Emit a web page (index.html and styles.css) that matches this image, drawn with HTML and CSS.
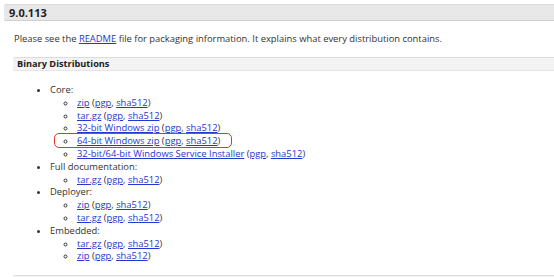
FILE: index.html
```html
<!DOCTYPE html>
<html lang="en">

<head>
    <meta charset="UTF-8">
    <meta name="viewport" content="width=device-width, initial-scale=1.0">
    <title>Tomcat 9 Downloads</title>
    <link rel="stylesheet" href="styles.css">
</head>

<body>
    <div class="page">
        <h3 class="release">9.0.113</h3>
        <div class="section">
            <p class="intro">Please see the <a href="#">README</a> file for packaging information. It explains what every distribution contains.</p>

            <h4 class="dist">Binary Distributions</h4>
            <ul class="groups">
                <li>Core:
                    <ul>
                        <li><a href="#">zip</a> (<a href="#">pgp</a>, <a href="#">sha512</a>)</li>
                        <li><a href="#">tar.gz</a> (<a href="#">pgp</a>, <a href="#">sha512</a>)</li>
                        <li><a href="#">32-bit Windows zip</a> (<a href="#">pgp</a>, <a href="#">sha512</a>)</li>
                        <li><span class="marked"><a href="#">64-bit Windows zip</a> (<a href="#">pgp</a>, <a href="#">sha512</a>)</span></li>
                        <li><a href="#">32-bit/64-bit Windows Service Installer</a> (<a href="#">pgp</a>, <a href="#">sha512</a>)</li>
                    </ul>
                </li>
                <li>Full documentation:
                    <ul>
                        <li><a href="#">tar.gz</a> (<a href="#">pgp</a>, <a href="#">sha512</a>)</li>
                    </ul>
                </li>
                <li>Deployer:
                    <ul>
                        <li><a href="#">zip</a> (<a href="#">pgp</a>, <a href="#">sha512</a>)</li>
                        <li><a href="#">tar.gz</a> (<a href="#">pgp</a>, <a href="#">sha512</a>)</li>
                    </ul>
                </li>
                <li>Embedded:
                    <ul>
                        <li><a href="#">tar.gz</a> (<a href="#">pgp</a>, <a href="#">sha512</a>)</li>
                        <li><a href="#">zip</a> (<a href="#">pgp</a>, <a href="#">sha512</a>)</li>
                    </ul>
                </li>
            </ul>

            <h4 class="dist"></h4>
        </div>
    </div>
</body>

</html>
```

FILE: styles.css
```css
body {
    margin: 0;
    background: #fff;
    color: #333;
    font-family: "Open Sans", "Liberation Sans", sans-serif;
    font-size: 9.4px;
    overflow: hidden;
}

a {
    color: #2438d0;
    text-decoration: underline;
}

.page {
    padding: 4px 0 0 4px;
}

.release {
    margin: 0;
    padding: 0 5px;
    height: 15px;
    line-height: 15px;
    font-size: 11px;
    font-weight: bold;
    color: #222;
    background: #e8e8e8;
    border-top: 1px solid #d8d8d8;
    border-bottom: 1px solid #cfcfcf;
    border-radius: 2px 0 0 2px;
}

.section {
    padding-left: 9px;
}

.intro {
    margin: 11px 0 0 1px;
    line-height: 13px;
}

.dist {
    margin: 12px 0 0 0;
    padding: 0 4px;
    height: 12px;
    line-height: 12px;
    font-size: 9.2px;
    font-weight: bold;
    color: #222;
    background: #f3f3f3;
    border-top: 1px solid #dcdcdc;
    border-bottom: 1px solid #e6e6e6;
    border-radius: 2px 0 0 2px;
}

.groups {
    margin: 13px 0 0 0;
    padding-left: 37px;
    line-height: 12.8px;
}

.groups ul {
    margin: 0;
    padding-left: 27px;
}

.marked {
    position: relative;
}

.marked::after {
    content: "";
    position: absolute;
    left: -23px;
    right: -12px;
    top: -1px;
    bottom: -1px;
    border: 1.5px solid #e0352b;
    border-radius: 5px;
}
```
